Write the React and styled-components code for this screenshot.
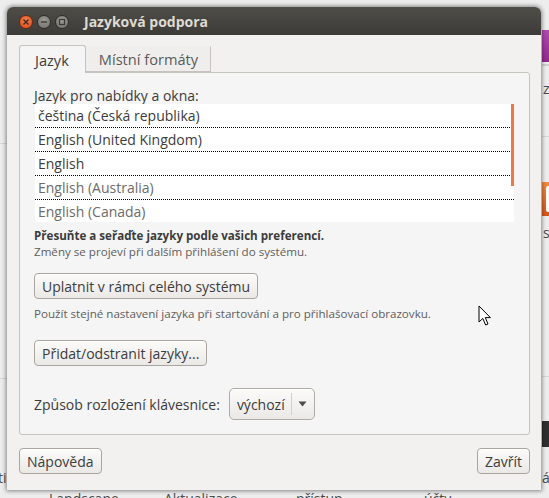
import styled, { createGlobalStyle } from "styled-components";

const GlobalStyle = createGlobalStyle`
  html, body {
    margin: 0;
    padding: 0;
    background: #ececec;
  }
  * {
    box-sizing: border-box;
  }
`;

const FONT = `"Open Sans", "Noto Sans", "DejaVu Sans", sans-serif`;

const languages = [
  { name: "čeština (Česká republika)", dim: false },
  { name: "English (United Kingdom)", dim: false },
  { name: "English", dim: false },
  { name: "English (Australia)", dim: true },
  { name: "English (Canada)", dim: true },
];

const App = () => {
  return (
    <>
      <GlobalStyle />
      <Desktop>
        <Backdrop />
        <Window>
          <TitleBar>
            <WinButtons>
              <WinButton kind="close">
                <svg width="8" height="8" viewBox="0 0 8 8">
                  <path d="M1.5 1.5 L6.5 6.5 M6.5 1.5 L1.5 6.5" stroke="#3a2a22" strokeWidth="1.4" />
                </svg>
              </WinButton>
              <WinButton>
                <svg width="8" height="8" viewBox="0 0 8 8">
                  <path d="M1 4 H7" stroke="#3b3a36" strokeWidth="1.4" />
                </svg>
              </WinButton>
              <WinButton>
                <svg width="8" height="8" viewBox="0 0 8 8">
                  <rect x="1.5" y="1.5" width="5" height="5" fill="none" stroke="#3b3a36" strokeWidth="1.2" />
                </svg>
              </WinButton>
            </WinButtons>
            <Title>Jazyková podpora</Title>
          </TitleBar>

          <Body>
            <Tabs>
              <Tab active>Jazyk</Tab>
              <Tab>Místní formáty</Tab>
            </Tabs>

            <Panel>
              <Label>Jazyk pro nabídky a okna:</Label>
              <List>
                {languages.map(lang => (
                  <Row key={lang.name} dim={lang.dim}>
                    {lang.name}
                  </Row>
                ))}
                <Scrollbar />
              </List>

              <Hint bold gap={6}>Přesuňte a seřaďte jazyky podle vašich preferencí.</Hint>
              <Hint>Změny se projeví při dalším přihlášení do systému.</Hint>

              <Button gap={13}>Uplatnit v rámci celého systému</Button>
              <Hint gap={7}>
                Použít stejné nastavení jazyka při startování a pro přihlašovací obrazovku.
              </Hint>

              <Button gap={18}>Přidat/odstranit jazyky...</Button>

              <KeyboardRow>
                <span>Způsob rozložení klávesnice:</span>
                <Combo>
                  <ComboText>výchozí</ComboText>
                  <ComboArrow>
                    <svg width="9" height="6" viewBox="0 0 9 6">
                      <path d="M0.5 0.5 H8.5 L4.5 5.5 Z" fill="#4c4c4c" />
                    </svg>
                  </ComboArrow>
                </Combo>
              </KeyboardRow>
            </Panel>

            <Footer>
              <Button>Nápověda</Button>
              <Button>Zavřít</Button>
            </Footer>
          </Body>
        </Window>

        <Cursor width="14" height="22" viewBox="0 0 14 22">
          <path
            d="M1 1 L1 17 L4.8 13.4 L7.6 20 L10 19 L7.3 12.6 L12.4 12.6 Z"
            fill="#fff"
            stroke="#000"
            strokeWidth="1"
            strokeLinejoin="round"
          />
        </Cursor>
      </Desktop>
    </>
  );
};

export default App;

const Backdrop = () => (
  <>
    <Bit style={{ left: 0, top: 143, width: 7, height: 1, background: "#d6d6d6" }} />
    <Bit style={{ left: 0, top: 378, width: 7, height: 1, background: "#d6d6d6" }} />
    <Bit style={{ left: 542, top: 30, width: 7, height: 32, background: "linear-gradient(#b04aae, #8e2a8c)" }} />
    <Bit style={{ left: 542, top: 64, width: 7, height: 2, background: "#cfcfcf" }} />
    <Bit style={{ left: 542, top: 136, width: 7, height: 1, background: "#d6d6d6" }} />
    <Bit style={{ left: 542, top: 182, width: 7, height: 34, background: "linear-gradient(#f08a40, #d2541c)" }} />
    <Bit style={{ left: 546, top: 186, width: 5, height: 26, background: "#fafafa", borderRadius: 2 }} />
    <Bit style={{ left: 542, top: 376, width: 7, height: 1, background: "#d6d6d6" }} />
    <Bit style={{ left: 542, top: 421, width: 7, height: 26, background: "#2f2f2f" }} />
    <BackText style={{ left: 543, top: 80 }}>z</BackText>
    <BackText style={{ left: 543, top: 224 }}>s</BackText>
    <BackText style={{ left: -2, top: 469 }}>ti</BackText>
    <BackText style={{ left: 542, top: 469 }}>á</BackText>
    <BackText style={{ left: 49, top: 490 }}>Landscape</BackText>
    <BackText style={{ left: 164, top: 490 }}>Aktualizace</BackText>
    <BackText style={{ left: 296, top: 490 }}>přístup</BackText>
    <BackText style={{ left: 424, top: 490 }}>účty</BackText>
  </>
);

const Desktop = styled.div`
  position: relative;
  width: 549px;
  height: 498px;
  overflow: hidden;
  background: #ededed;
  padding: 7px 0 0 7px;
  font-family: ${FONT};
`;

const Bit = styled.div`
  position: absolute;
`;

const BackText = styled.div`
  position: absolute;
  font-size: 14px;
  line-height: 18px;
  color: #4a4a4a;
  white-space: nowrap;
`;

const Window = styled.div`
  position: relative;
  width: 534px;
  height: 483px;
  display: flex;
  flex-direction: column;
  border-radius: 6px 6px 0 0;
  box-shadow: 0 0 4px 1px rgba(0, 0, 0, 0.45);
  background: #f2f1f0;
`;

const TitleBar = styled.div`
  height: 28px;
  flex: none;
  display: flex;
  align-items: center;
  padding-left: 12px;
  border-radius: 6px 6px 0 0;
  background: linear-gradient(#4e4d48, #3c3b37);
`;

const WinButtons = styled.div`
  display: flex;
  gap: 4px;
  margin-top: 1px;
`;

const WinButton = styled.div`
  width: 14px;
  height: 14px;
  border-radius: 50%;
  display: flex;
  align-items: center;
  justify-content: center;
  border: 1px solid ${p => (p.kind === "close" ? "#6e2a10" : "#2e2d2a")};
  background: ${p =>
    p.kind === "close"
      ? "radial-gradient(circle at 50% 35%, #f77d4e, #df4a16)"
      : "radial-gradient(circle at 50% 35%, #9b9a94, #6f6e68)"};
`;

const Title = styled.div`
  margin-left: 15px;
  font-size: 14px;
  font-weight: 700;
  color: #dfdbd2;
`;

const Body = styled.div`
  flex: 1;
  display: flex;
  flex-direction: column;
  padding: 10px 11px 0 12px;
`;

const Tabs = styled.div`
  display: flex;
  height: 27px;
  align-items: flex-end;
`;

const Tab = styled.div`
  height: ${p => (p.active ? "28px" : "26px")};
  margin-bottom: ${p => (p.active ? "-1px" : "0")};
  padding: ${p => (p.active ? "0 16px 0 15px" : "0 12px 0 13px")};
  display: flex;
  align-items: center;
  font-size: 14.6px;
  color: ${p => (p.active ? "#3c3c3c" : "#5a5a5a")};
  background: ${p => (p.active ? "#f5f5f5" : "#efeeed")};
  border: 1px solid #c6c3bf;
  border-top-color: ${p => (p.active ? "#c6c3bf" : "transparent")};
  border-left: ${p => (p.active ? "1px solid #c6c3bf" : "none")};
  border-bottom: ${p => (p.active ? "none" : "1px solid #c6c3bf")};
  border-radius: ${p => (p.active ? "3px 3px 0 0" : "0")};
  position: relative;
  z-index: ${p => (p.active ? 1 : 0)};
`;

const Panel = styled.div`
  height: 363px;
  display: flex;
  flex-direction: column;
  align-items: flex-start;
  padding: 14px 15px 0 14px;
  background: #f5f5f5;
  border: 1px solid #c6c3bf;
  border-radius: 0 3px 3px 3px;
`;

const Label = styled.div`
  font-size: 14px;
  line-height: 17px;
  color: #3c3c3c;
`;

const List = styled.div`
  position: relative;
  align-self: stretch;
  margin-left: 1px;
  height: 118px;
  overflow: hidden;
  background: #ffffff;
`;

const Row = styled.div`
  height: 24px;
  padding-left: 3px;
  display: flex;
  align-items: center;
  font-size: 14px;
  color: ${p => (p.dim ? "#6b6b6b" : "#3c3c3c")};
  border-bottom: 1px dotted #000;
  &:last-of-type {
    border-bottom: none;
  }
`;

const Scrollbar = styled.div`
  position: absolute;
  right: 0;
  top: 0;
  width: 3px;
  height: 82px;
  background: #f07746;
`;

const Hint = styled.div`
  margin-top: ${p => p.gap || 0}px;
  font-size: 11.6px;
  line-height: 16px;
  color: ${p => (p.bold ? "#3c3c3c" : "#5e5e5e")};
  font-weight: ${p => (p.bold ? 700 : 400)};
`;

const Button = styled.div`
  margin-top: ${p => p.gap || 0}px;
  height: 26px;
  padding: 0 7px;
  display: inline-flex;
  align-items: center;
  font-size: 14px;
  color: #3c3c3c;
  border: 1px solid #aaa69f;
  border-radius: 4px;
  background: linear-gradient(#fbfbfa, #ebe9e6);
  box-shadow: inset 0 1px 0 #ffffff;
`;

const KeyboardRow = styled.div`
  margin-top: 22px;
  display: flex;
  align-items: center;
  gap: 9px;
  font-size: 14px;
  color: #3c3c3c;
`;

const Combo = styled.div`
  height: 32px;
  display: flex;
  align-items: center;
  border: 1px solid #b0aca5;
  border-radius: 5px;
  background: linear-gradient(#fbfbfa, #ebe9e6);
  box-shadow: inset 0 1px 0 #ffffff;
`;

const ComboText = styled.div`
  padding: 0 6px 0 7px;
  font-size: 14px;
  color: #3c3c3c;
  border-right: 1px solid #d4d1cc;
  height: 22px;
  display: flex;
  align-items: center;
`;

const ComboArrow = styled.div`
  width: 22px;
  display: flex;
  justify-content: center;
`;

const Footer = styled.div`
  margin-top: 13px;
  display: flex;
  justify-content: space-between;
`;

const Cursor = styled.svg`
  position: absolute;
  left: 478px;
  top: 305px;
`;
